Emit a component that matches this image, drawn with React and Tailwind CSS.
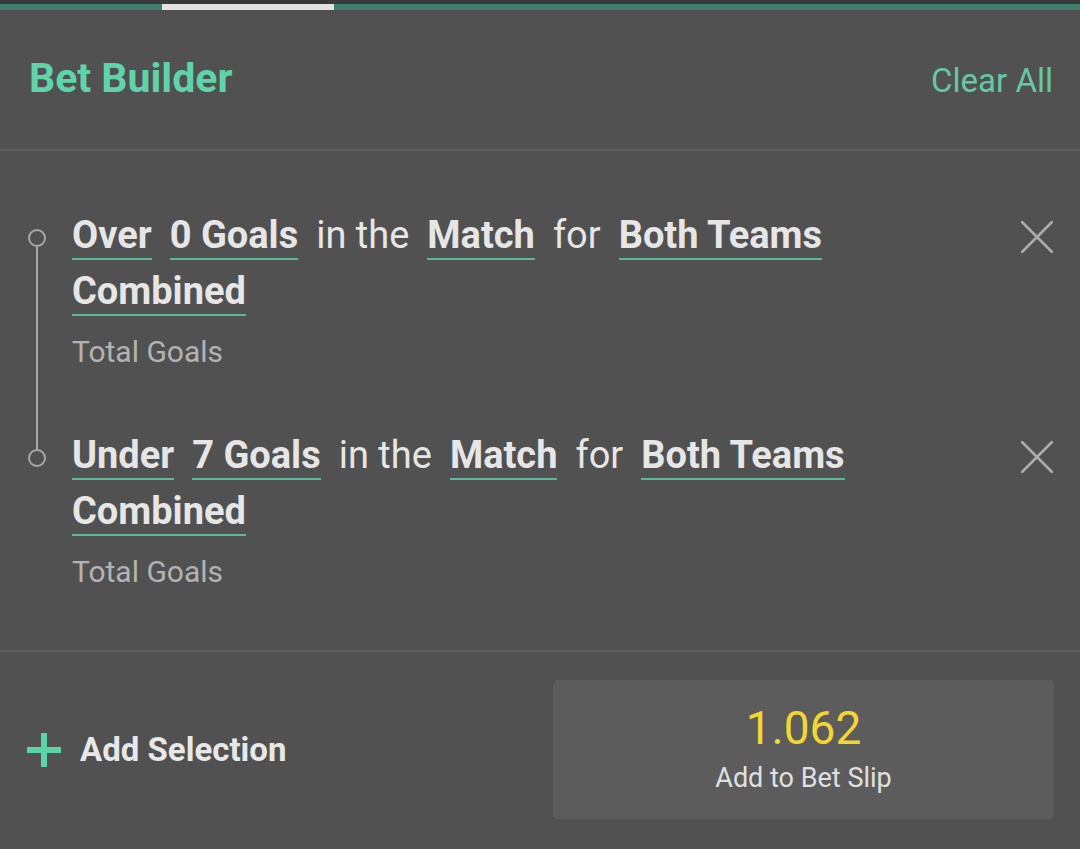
const legs = [
  {
    tokens: [
      { text: "Over", pick: true },
      { text: "0 Goals", pick: true },
      { text: "in the" },
      { text: "Match", pick: true },
      { text: "for" },
      { text: "Both Teams", pick: true },
      { text: "Combined", pick: true },
    ],
    market: "Total Goals",
  },
  {
    tokens: [
      { text: "Under", pick: true },
      { text: "7 Goals", pick: true },
      { text: "in the" },
      { text: "Match", pick: true },
      { text: "for" },
      { text: "Both Teams", pick: true },
      { text: "Combined", pick: true },
    ],
    market: "Total Goals",
  },
];

const CloseIcon = () => (
  <svg width="32" height="32" viewBox="0 0 32 32" fill="none">
    <path d="M1 1L31 31M31 1L1 31" stroke="#adadad" strokeWidth="2.5" strokeLinecap="round" />
  </svg>
);

const PlusIcon = () => (
  <svg width="34" height="34" viewBox="0 0 34 34">
    <rect x="14" y="0" width="6" height="34" fill="#5dd3a8" />
    <rect x="0" y="14" width="34" height="6" fill="#5dd3a8" />
  </svg>
);

const Leg = ({ leg, first, last }) => (
  <div className="flex">
    {/* timeline */}
    <div className="flex flex-col items-center w-[18px] ml-[28px] mr-[26px]">
      <div className={`h-[17px] w-[2px] ${first ? "" : "bg-[#a8a8a8]"}`} />
      <div className="w-[18px] h-[18px] rounded-full border-2 border-[#a8a8a8] shrink-0" />
      {!last && <div className="flex-1 w-[2px] bg-[#a8a8a8]" />}
    </div>

    <div className={`flex-1 ${last ? "" : "pb-[63px]"}`}>
      <div className="flex flex-wrap gap-x-[18px] gap-y-[8px] max-w-[900px]">
        {leg.tokens.map((t, i) => (
          <span
            key={i}
            className={`text-[38px] leading-[46px] text-[#e6e6e6] whitespace-nowrap border-b-2 ${
              t.pick ? "font-bold border-[#5cb898]" : "font-normal border-transparent"
            }`}
          >
            {t.text}
          </span>
        ))}
      </div>
      <div className="mt-[19px] text-[30px] leading-[34px] text-[#b3b3b3]">{leg.market}</div>
    </div>

    <button className="mt-[9px] mr-[27px] self-start">
      <CloseIcon />
    </button>
  </div>
);

export default function App() {
  return (
    <div
      className="w-[1080px] h-[849px] bg-[#515151] overflow-hidden flex flex-col"
      style={{ fontFamily: "Roboto, 'Noto Sans', sans-serif" }}
    >
      {/* Tab indicator */}
      <div className="h-[4px] bg-[#3a3a3a]" />
      <div className="h-[6px] bg-[#3f7f6c] flex">
        <div className="ml-[162px] w-[172px] h-full bg-[#e2e2e2]" />
      </div>

      {/* Header */}
      <div className="h-[139px] flex items-baseline justify-between pl-[29px] pr-[27px] pt-[45px]">
        <h1 className="text-[41px] leading-[47px] font-bold text-[#5fd4aa]">Bet Builder</h1>
        <button className="text-[33px] leading-[39px] text-[#64c9a3]">Clear All</button>
      </div>
      <div className="h-[2px] bg-[#5e5e5e]" />

      {/* Selections */}
      <div className="pt-[61px] pb-[61px]">
        {legs.map((leg, i) => (
          <Leg key={i} leg={leg} first={i === 0} last={i === legs.length - 1} />
        ))}
      </div>
      <div className="h-[2px] bg-[#5e5e5e]" />

      {/* Footer */}
      <div className="flex items-start justify-between pl-[27px] pr-[26px] pt-[28px]">
        <div className="flex items-center gap-[19px] h-[139px]">
          <PlusIcon />
          <span className="text-[33px] leading-[39px] font-bold text-[#e8e8e8]">Add Selection</span>
        </div>
        <button className="w-[501px] h-[139px] rounded-[5px] bg-[#5c5c5c] flex flex-col items-center pt-[21px]">
          <span className="text-[46px] leading-[54px] text-[#f3d634]">1.062</span>
          <span className="mt-[7px] text-[27px] leading-[32px] text-[#e0e0e0]">Add to Bet Slip</span>
        </button>
      </div>
    </div>
  );
}
